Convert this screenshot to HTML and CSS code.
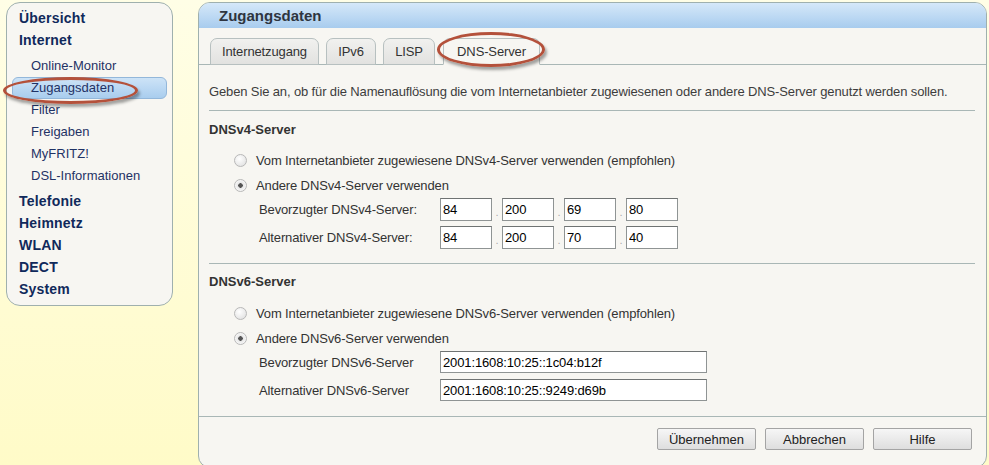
FILE: index.html
```html
<!DOCTYPE html>
<html lang="de">
<head>
    <meta charset="UTF-8">
    <title>Zugangsdaten</title>
    <link rel="stylesheet" href="styles.css">
</head>
<body>
    <div class="page">
        <!-- Menu -->
        <nav class="menu">
            <ul>
                <li class="menu-main"><a href="#">Übersicht</a></li>
                <li class="menu-main"><a href="#">Internet</a>
                    <ul class="submenu">
                        <li><a href="#">Online-Monitor</a></li>
                        <li class="active"><a href="#">Zugangsdaten</a></li>
                        <li><a href="#">Filter</a></li>
                        <li><a href="#">Freigaben</a></li>
                        <li><a href="#">MyFRITZ!</a></li>
                        <li><a href="#">DSL-Informationen</a></li>
                    </ul>
                </li>
                <li class="menu-main"><a href="#">Telefonie</a></li>
                <li class="menu-main"><a href="#">Heimnetz</a></li>
                <li class="menu-main"><a href="#">WLAN</a></li>
                <li class="menu-main"><a href="#">DECT</a></li>
                <li class="menu-main"><a href="#">System</a></li>
            </ul>
            <span class="mark mark-menu"></span>
        </nav>

        <!-- Content -->
        <div class="panel">
            <div class="panel-head">Zugangsdaten</div>
            <div class="tabs">
                <a href="#" class="tab tab-inet">Internetzugang</a>
                <a href="#" class="tab tab-ipv6">IPv6</a>
                <a href="#" class="tab tab-lisp">LISP</a>
                <a href="#" class="tab tab-dns active">DNS-Server</a>
            </div>

            <div class="panel-body">
                <p class="desc">Geben Sie an, ob für die Namenauflösung die vom Internetanbieter zugewiesenen oder andere DNS-Server genutzt werden sollen.</p>

                <div class="section">
                    <h3>DNSv4-Server</h3>
                    <div class="options">
                        <label class="option"><input type="radio" name="dns4"> Vom Internetanbieter zugewiesene DNSv4-Server verwenden (empfohlen)</label>
                        <label class="option"><input type="radio" name="dns4" checked> Andere DNSv4-Server verwenden</label>
                    </div>
                    <div class="field">
                        <span class="field-label">Bevorzugter DNSv4-Server:</span>
                        <input class="ip" type="text" value="84"><span class="sep">.</span>
                        <input class="ip" type="text" value="200"><span class="sep">.</span>
                        <input class="ip" type="text" value="69"><span class="sep">.</span>
                        <input class="ip" type="text" value="80">
                    </div>
                    <div class="field">
                        <span class="field-label">Alternativer DNSv4-Server:</span>
                        <input class="ip" type="text" value="84"><span class="sep">.</span>
                        <input class="ip" type="text" value="200"><span class="sep">.</span>
                        <input class="ip" type="text" value="70"><span class="sep">.</span>
                        <input class="ip" type="text" value="40">
                    </div>
                </div>

                <div class="section section-v6">
                    <h3>DNSv6-Server</h3>
                    <div class="options">
                        <label class="option"><input type="radio" name="dns6"> Vom Internetanbieter zugewiesene DNSv6-Server verwenden (empfohlen)</label>
                        <label class="option"><input type="radio" name="dns6" checked> Andere DNSv6-Server verwenden</label>
                    </div>
                    <div class="field field-v6">
                        <span class="field-label">Bevorzugter DNSv6-Server</span>
                        <input class="ip6" type="text" value="2001:1608:10:25::1c04:b12f">
                    </div>
                    <div class="field field-v6">
                        <span class="field-label">Alternativer DNSv6-Server</span>
                        <input class="ip6" type="text" value="2001:1608:10:25::9249:d69b">
                    </div>
                </div>
            </div>

            <div class="panel-foot">
                <button class="btn">Übernehmen</button>
                <button class="btn">Abbrechen</button>
                <button class="btn">Hilfe</button>
            </div>

            <span class="mark mark-tab"></span>
        </div>
    </div>
</body>
</html>
```

FILE: styles.css
```css
/* General */
body {
    margin: 0;
    height: 465px;
    overflow: hidden;
    font-family: "Liberation Sans", Arial, sans-serif;
    font-size: 13px;
    letter-spacing: -0.13px;
    color: #333;
    background: linear-gradient(#fffee6, #fffbc8);
}

.page {
    display: flex;
    align-items: flex-start;
    gap: 25px;
    padding: 2px 0 0 6px;
}

a {
    text-decoration: none;
}

/* Left menu */
.menu {
    position: relative;
    box-sizing: border-box;
    width: 167px;
    padding: 4px 0 5px;
    background-color: #f7f6f2;
    border: 1px solid #9fb0ae;
    border-radius: 14px;
}

.menu ul {
    list-style: none;
    margin: 0;
    padding: 0;
}

.menu-main > a {
    display: block;
    height: 22px;
    line-height: 22px;
    padding-left: 12px;
    font-size: 14px;
    font-weight: bold;
    letter-spacing: 0.2px;
    color: #10295b;
}

.menu .submenu {
    margin: 4px 0 3px;
}

.submenu li a {
    display: block;
    box-sizing: border-box;
    height: 22px;
    line-height: 20px;
    margin: 0 5px;
    padding-left: 18px;
    letter-spacing: 0;
    color: #1f3265;
    border: 1px solid transparent;
    border-radius: 6px;
}

.submenu li.active a {
    background: linear-gradient(#cde3f7, #a9cdee);
    border-color: #93b7da;
}

/* Red hand-drawn marks */
.mark {
    position: absolute;
    box-sizing: border-box;
    border: 3px solid #b4513b;
    border-radius: 50%;
    box-shadow: 2px 3px 3px rgba(0, 0, 0, 0.35);
    pointer-events: none;
}

.mark-menu {
    left: -4px;
    top: 74px;
    width: 135px;
    height: 27px;
}

.mark-tab {
    left: 238px;
    top: 29px;
    width: 108px;
    height: 35px;
}

/* Main panel */
.panel {
    position: relative;
    box-sizing: border-box;
    width: 789px;
    background-color: #f7f6f2;
    border: 1px solid #9fb0ae;
    border-radius: 12px;
}

.panel-head {
    height: 25px;
    line-height: 25px;
    padding-left: 20px;
    font-size: 15px;
    font-weight: bold;
    letter-spacing: 0;
    color: #2e3540;
    background: linear-gradient(#d5e8f9, #a8ccee);
    border-radius: 11px 11px 0 0;
}

/* Tabs */
.tabs {
    display: flex;
    align-items: flex-end;
    gap: 7px;
    height: 26px;
    padding: 10px 0 0 11px;
    border-bottom: 1px solid #a9b7b6;
}

.tab {
    box-sizing: border-box;
    height: 27px;
    margin-bottom: -1px;
    line-height: 25px;
    text-align: center;
    color: #333;
    background: linear-gradient(#f1f1ef, #e2e2e0);
    border: 1px solid #b7c0c0;
    border-radius: 7px 7px 0 0;
}

.tab-inet { width: 109px; }
.tab-ipv6 { width: 50px; }
.tab-lisp { width: 52px; }

.tab-dns {
    width: 97px;
    margin-left: 1px;
}

.tab.active {
    background: #f7f6f2;
    border-bottom-color: #f7f6f2;
}

/* Body */
.panel-body {
    padding: 0 11px 0 10px;
}

.desc {
    margin: 18px 0 0;
    line-height: 18px;
    color: #3d3d3d;
    padding-bottom: 9px;
    border-bottom: 1px solid #a9b7b6;
}

.section h3 {
    margin: 10px 0 0;
    line-height: 18px;
    font-size: 13px;
    letter-spacing: 0;
    color: #333;
}

.section {
    padding-bottom: 14px;
    border-bottom: 1px solid #a9b7b6;
}

.section-v6 {
    border-bottom: none;
    padding-bottom: 0;
}

.section-v6 h3 {
    margin-top: 9px;
}

.options {
    margin: 9px 0 0 25px;
}

.section-v6 .options {
    margin-top: 10px;
}

.option {
    display: flex;
    align-items: center;
    gap: 9px;
    height: 25px;
    color: #333;
}

.option input {
    appearance: none;
    -webkit-appearance: none;
    box-sizing: border-box;
    width: 13px;
    height: 13px;
    margin: 0;
    border: 1px solid #b8b8b8;
    border-radius: 50%;
    background: radial-gradient(circle at 40% 35%, #ffffff, #dcdcdc);
}

.option input:checked {
    background: radial-gradient(circle, #555 0, #555 2px, #e6e6e6 2.5px, #fafafa 6px);
}

/* Input rows */
.field {
    display: flex;
    align-items: center;
    height: 23px;
    padding-left: 50px;
}

.field + .field {
    margin-top: 5px;
}

.field-label {
    width: 181px;
    color: #333;
}

.field input {
    box-sizing: border-box;
    height: 23px;
    margin: 0;
    padding: 0 2px;
    font-family: "Liberation Sans", Arial, sans-serif;
    font-size: 13px;
    letter-spacing: -0.13px;
    color: #000;
    background: #fff;
    border: 1px solid #8f9494;
    border-top-color: #6f7373;
}

.ip {
    width: 52px;
}

.sep {
    width: 10px;
    text-align: center;
    color: #aaa;
    font-size: 11px;
    padding-top: 4px;
}

.field-v6 {
    height: 22px;
}

.field-v6:first-of-type {
    margin-top: 1px;
}

.field-v6 + .field-v6 {
    margin-top: 6px;
}

.field-v6 input {
    height: 22px;
}

.ip6 {
    width: 267px;
}

/* Footer buttons */
.panel-foot {
    display: flex;
    justify-content: flex-end;
    gap: 9px;
    margin-top: 15px;
    padding: 11px 14px 17px;
    border-top: 1px solid #a9b7b6;
}

.btn {
    height: 22px;
    width: 99px;
    padding: 0;
    font-family: "Liberation Sans", Arial, sans-serif;
    font-size: 13px;
    color: #222;
    background: linear-gradient(#f6f6f6, #dedede);
    border: 1px solid #a4a4a4;
    border-radius: 2px;
}
```
